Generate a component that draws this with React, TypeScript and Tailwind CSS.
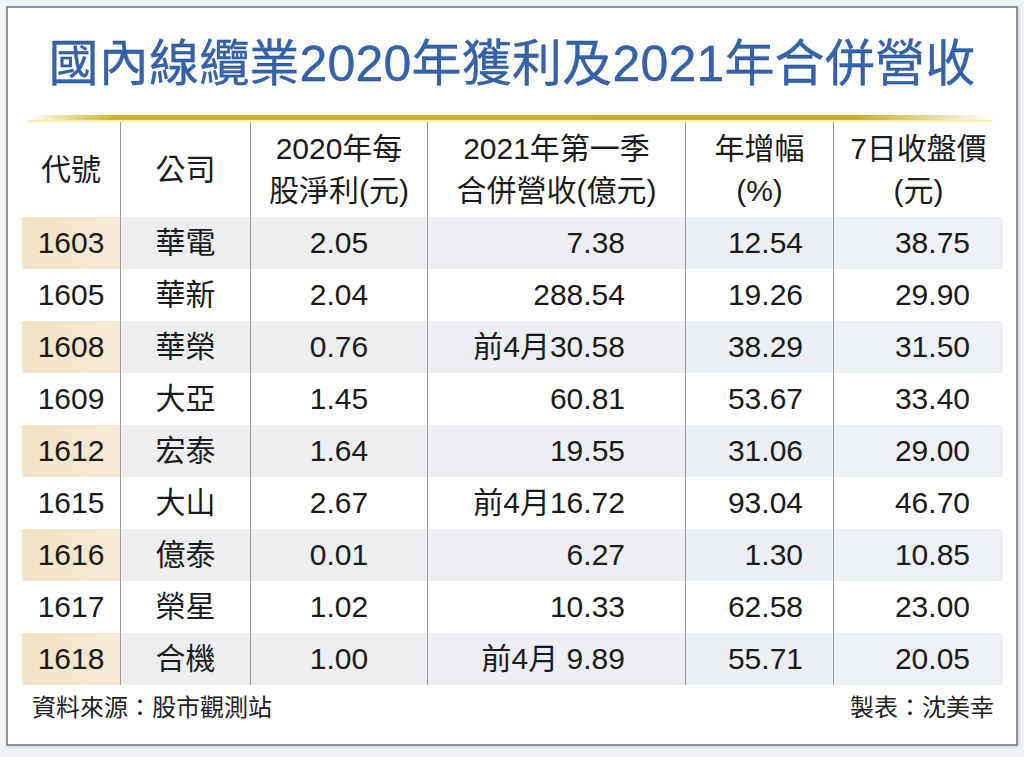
import React from "react";

const rows: [string, string, string, string, string, string][] = [
  ["1603", "華電", "2.05", "7.38", "12.54", "38.75"],
  ["1605", "華新", "2.04", "288.54", "19.26", "29.90"],
  ["1608", "華榮", "0.76", "前4月30.58", "38.29", "31.50"],
  ["1609", "大亞", "1.45", "60.81", "53.67", "33.40"],
  ["1612", "宏泰", "1.64", "19.55", "31.06", "29.00"],
  ["1615", "大山", "2.67", "前4月16.72", "93.04", "46.70"],
  ["1616", "億泰", "0.01", "6.27", "1.30", "10.85"],
  ["1617", "榮星", "1.02", "10.33", "62.58", "23.00"],
  ["1618", "合機", "1.00", "前4月 9.89", "55.71", "20.05"],
];

const grid = "grid grid-cols-[98px_130px_177px_258px_148px_170px]";

export default function App() {
  return (
    <div className="w-[1024px] h-[757px] bg-[#f0f2f5] overflow-hidden pt-[6px] pl-[6px] font-['Liberation_Sans','Noto_Sans_CJK_TC',sans-serif] text-[#1b1b1b]">
      <div className="w-[1012px] h-[740px] border-2 border-[#8c95a1] bg-white flex flex-col shadow-[1px_1px_2px_rgba(0,0,0,0.15)]">
        {/* Title */}
        <div className="h-[107px] flex items-center justify-center pt-[4px]">
          <h1 className="text-[50px] leading-none tracking-[0.2px] text-[#3563ab] [-webkit-text-stroke:0.3px_#1f4b8f] font-normal">
            國內線纜業2020年獲利及2021年合併營收
          </h1>
        </div>
        {/* Gold line */}
        <div className="ml-[20px] w-[964px] h-[5px] bg-[linear-gradient(to_right,rgba(230,210,80,0),#cdb42c_9%,#c9b02a_86%,rgba(230,210,80,0))] shadow-[0_2px_2px_rgba(240,225,90,0.5)]" />

        {/* Table */}
        <div className="ml-[14px] mt-[2px] w-[981px]">
          <div className={`${grid} h-[95px] text-[30px] leading-[42px]`}>
            <div className="flex items-center justify-center">代號</div>
            <div className="flex items-center justify-center border-l border-[#9c9c9c]">公司</div>
            <div className="flex flex-col items-center justify-center border-l border-[#9c9c9c]">
              <span>2020年每</span>
              <span>股淨利(元)</span>
            </div>
            <div className="flex flex-col items-center justify-center border-l border-[#9c9c9c]">
              <span>2021年第一季</span>
              <span>合併營收(億元)</span>
            </div>
            <div className="flex flex-col items-center justify-center border-l border-[#9c9c9c]">
              <span>年增幅</span>
              <span>(%)</span>
            </div>
            <div className="flex flex-col items-center justify-center border-l border-[#9c9c9c]">
              <span>7日收盤價</span>
              <span>(元)</span>
            </div>
          </div>
          {rows.map((r, i) => {
            const striped = i % 2 === 0;
            return (
              <div key={r[0]} className={`${grid} h-[52px] text-[30px] leading-none`}>
                <div
                  className={`flex items-center justify-center ${
                    striped ? "bg-[linear-gradient(to_right,#f1e2c3,#f4ead6)]" : ""
                  }`}
                >
                  {r[0]}
                </div>
                <div
                  className={`flex items-center justify-center border-l border-[#9c9c9c] ${
                    striped ? "bg-[#eceef0]" : ""
                  }`}
                >
                  {r[1]}
                </div>
                <div
                  className={`flex items-center justify-center border-l border-[#9c9c9c] ${
                    striped ? "bg-[#eceef0]" : ""
                  }`}
                >
                  {r[2]}
                </div>
                <div
                  className={`flex items-center justify-end pr-[60px] border-l border-[#9c9c9c] whitespace-pre ${
                    striped ? "bg-[#eceef1]" : ""
                  }`}
                >
                  {r[3]}
                </div>
                <div
                  className={`flex items-center justify-end pr-[30px] border-l border-[#9c9c9c] ${
                    striped ? "bg-[#eceff2]" : ""
                  }`}
                >
                  {r[4]}
                </div>
                <div
                  className={`flex items-center justify-end pr-[33px] border-l border-[#9c9c9c] ${
                    striped ? "bg-[#edf0f4]" : ""
                  }`}
                >
                  {r[5]}
                </div>
              </div>
            );
          })}
        </div>

        {/* Footer */}
        <div className="flex justify-between pl-[24px] pr-[22px] pt-[8px] text-[24px] leading-[30px] text-[#222]">
          <span>資料來源：股市觀測站</span>
          <span>製表：沈美幸</span>
        </div>
      </div>
    </div>
  );
}
